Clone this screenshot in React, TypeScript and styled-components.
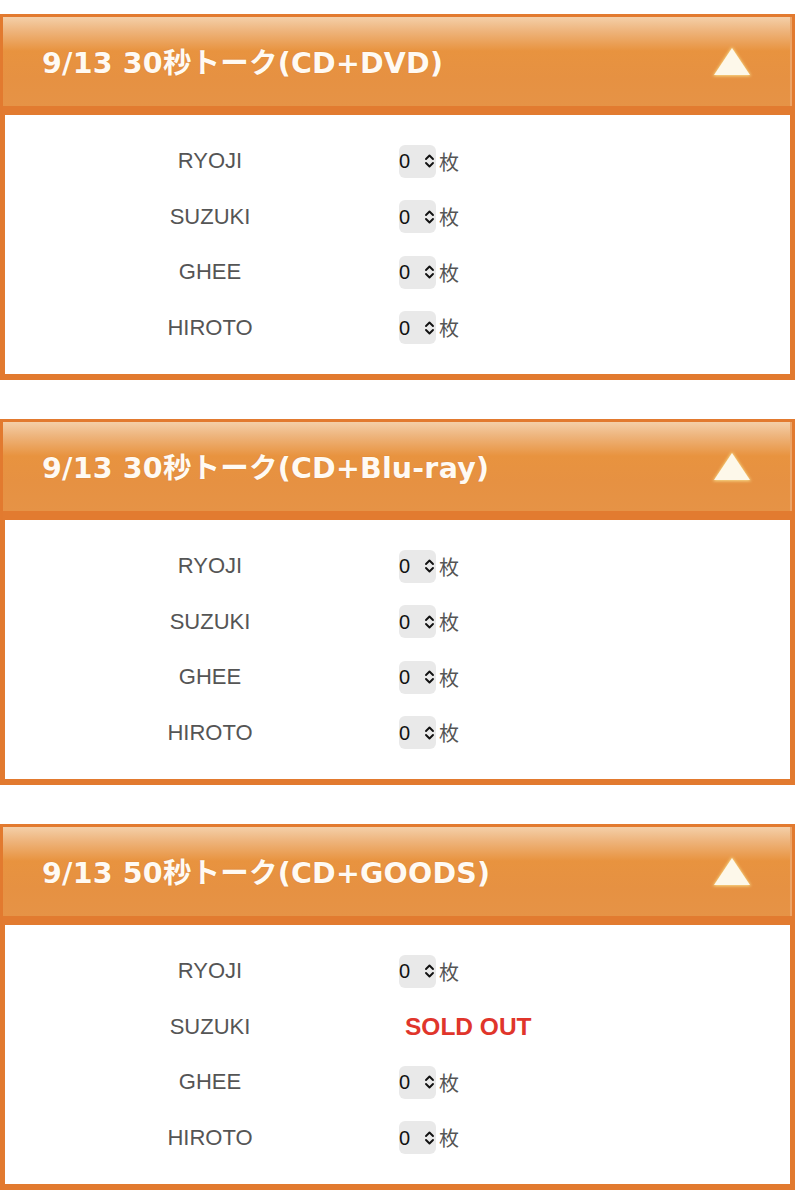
import React from "react";
import styled, { createGlobalStyle } from "styled-components";

const GlobalStyle = createGlobalStyle`
  html, body {
    margin: 0;
    padding: 0;
    background: #ffffff;
  }
  body {
    font-family: "Liberation Sans", "Noto Sans CJK JP", sans-serif;
  }
`;

const Page = styled.div`
  padding-top: 14px;
  display: flex;
  flex-direction: column;
  gap: 39px;
`;

const Panel = styled.section`
  border: 3px solid #e27a2f;
  border-bottom-width: 6px;
  background: #ffffff;
`;

const Header = styled.header`
  height: 89px;
  border-bottom: 9px solid #e27b30;
  background: linear-gradient(
    to bottom,
    #f4cfa8 0px,
    #eeb47c 14px,
    #e8933f 34px,
    #e69142 60px,
    #e69346 89px
  );
  box-shadow: inset -2px 0 0 #eca467;
  display: flex;
  align-items: center;
  justify-content: space-between;
  padding: 0 38px 0 39px;
`;

const Title = styled.h2`
  margin: 0;
  color: #fffaf3;
  font-family: "DejaVu Sans", "Noto Sans CJK JP", sans-serif;
  font-size: 28.5px;
  font-weight: 700;
  letter-spacing: 0.2px;
  text-shadow: 0 0 1px rgba(170, 80, 20, 0.35);
  padding-bottom: 2px;
`;

const Toggle = styled.svg`
  width: 44px;
  height: 38px;
  margin-bottom: 2px;
  overflow: visible;
`;

const Body = styled.div`
  border-left: 2px solid #e27a2f;
  border-right: 2px solid #e27a2f;
  padding: 18.5px 0;
  display: grid;
  grid-template-columns: 326px auto;
  grid-auto-rows: 55.5px;
  padding-left: 42px;
`;

const Name = styled.div`
  display: flex;
  align-items: center;
  justify-content: center;
  font-family: "Liberation Sans", "Noto Sans CJK JP", sans-serif;
  font-size: 22px;
  color: #555555;
`;

const Qty = styled.div`
  display: flex;
  align-items: center;
  padding-left: 26px;
`;

const PickerWrap = styled.label`
  position: relative;
  display: inline-flex;
  align-items: center;
`;

const Picker = styled.select`
  appearance: none;
  -webkit-appearance: none;
  border: none;
  outline: none;
  margin: 0;
  background: #e9e9e9;
  border-radius: 6px;
  width: 37px;
  height: 33px;
  padding: 0;
  font-family: "Liberation Sans", sans-serif;
  font-size: 20px;
  color: #111111;
`;

const Chevrons = styled.svg`
  position: absolute;
  right: 1px;
  top: 50%;
  width: 11px;
  height: 16px;
  transform: translateY(-50%);
  pointer-events: none;
`;

const Unit = styled.span`
  margin-left: 3px;
  font-family: "Noto Sans CJK JP", sans-serif;
  font-size: 20px;
  color: #555555;
`;

const SoldOut = styled.span`
  margin-left: 6px;
  font-family: "Liberation Sans", sans-serif;
  font-weight: 700;
  font-size: 24.5px;
  color: #e0352b;
`;

type Member = { name: string; soldOut?: boolean };

type Event = { title: string; members: Member[] };

const events: Event[] = [
  {
    title: "9/13 30秒トーク(CD+DVD)",
    members: [{ name: "RYOJI" }, { name: "SUZUKI" }, { name: "GHEE" }, { name: "HIROTO" }],
  },
  {
    title: "9/13 30秒トーク(CD+Blu-ray)",
    members: [{ name: "RYOJI" }, { name: "SUZUKI" }, { name: "GHEE" }, { name: "HIROTO" }],
  },
  {
    title: "9/13 50秒トーク(CD+GOODS)",
    members: [
      { name: "RYOJI" },
      { name: "SUZUKI", soldOut: true },
      { name: "GHEE" },
      { name: "HIROTO" },
    ],
  },
];

function CollapseIcon() {
  return (
    <Toggle viewBox="0 0 44 38">
      <defs>
        <filter id="glow" x="-40%" y="-40%" width="180%" height="180%">
          <feGaussianBlur stdDeviation="1.6" />
        </filter>
      </defs>
      <polygon points="22,5 41,34 3,34" fill="#f8de8c" filter="url(#glow)" />
      <polygon points="22,6 40,33 4,33" fill="#fdf8ea" />
    </Toggle>
  );
}

function QuantityPicker() {
  return (
    <PickerWrap>
      <Picker defaultValue="0">
        {Array.from({ length: 6 }, (_, i) => (
          <option key={i} value={String(i)}>
            {i}
          </option>
        ))}
      </Picker>
      <Chevrons viewBox="0 0 11 16">
        <path
          d="M2 6 L5.5 2.5 L9 6 M2 10 L5.5 13.5 L9 10"
          fill="none"
          stroke="#111"
          strokeWidth="1.9"
          strokeLinecap="round"
          strokeLinejoin="round"
        />
      </Chevrons>
    </PickerWrap>
  );
}

export default function App() {
  return (
    <>
      <GlobalStyle />
      <Page>
        {events.map((ev) => (
          <Panel key={ev.title}>
            <Header>
              <Title>{ev.title}</Title>
              <CollapseIcon />
            </Header>
            <Body>
              {ev.members.map((m) => (
                <React.Fragment key={m.name}>
                  <Name>{m.name}</Name>
                  <Qty>
                    {m.soldOut ? (
                      <SoldOut>SOLD OUT</SoldOut>
                    ) : (
                      <>
                        <QuantityPicker />
                        <Unit>枚</Unit>
                      </>
                    )}
                  </Qty>
                </React.Fragment>
              ))}
            </Body>
          </Panel>
        ))}
      </Page>
    </>
  );
}
